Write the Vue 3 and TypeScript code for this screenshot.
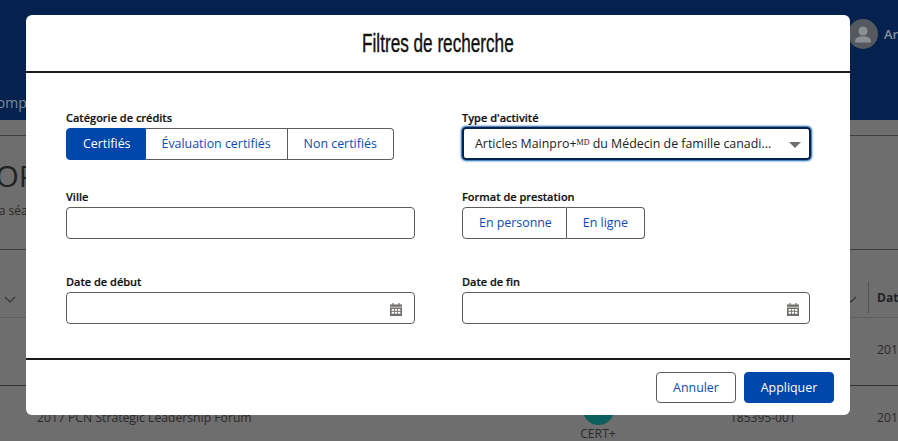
<script setup lang="ts">
const credits: string[] = ['Certifiés', 'Évaluation certifiés', 'Non certifiés']
const formats: string[] = ['En personne', 'En ligne']
</script>

<template>
  <div class="page">
    <header class="top">
      <div class="user">
        <span class="avatar">
          <svg viewBox="0 0 30 30" width="30" height="30"><circle cx="15" cy="12" r="4.6" fill="#8a8f96"/><path d="M7 22.500c0-3.800 3.700-5.300 8-5.300s8 1.500 8 5.300c0 .7-.5 1-1 1H8c-.5 0-1-.3-1-1z" fill="#8a8f96"/></svg>
        </span>
        <span class="user-name">Anne</span>
      </div>
      <div class="nav">Compétences</div>
    </header>
    <section class="intro">
      <h1>TOPO</h1>
      <p>Rechercher la séance</p>
    </section>
    <div class="thead">
      <svg class="chev" viewBox="0 0 12 8" width="12" height="8"><path d="M1 1l5 5 5-5" fill="none" stroke="#333" stroke-width="1.2"/></svg>
      <svg class="chev chev2" viewBox="0 0 12 8" width="12" height="8"><path d="M1 1l5 5 5-5" fill="none" stroke="#333" stroke-width="1.2"/></svg>
      <span class="th-date">Date</span>
    </div>
    <div class="row row-one"><span class="cell-date">2017</span></div>
    <div class="row row-two">
      <span class="cell-name">2017 PCN Strategic Leadership Forum</span>
      <span class="cert"><i></i>CERT+</span>
      <span class="cell-dash">-</span>
      <span class="cell-code">185395-001</span>
      <span class="cell-date">2017</span>
    </div>

    <div class="modal">
      <div class="modal-head"><h2>Filtres de recherche</h2></div>
      <div class="modal-body">
        <div class="field">
          <label>Catégorie de crédits</label>
          <div class="group">
            <button v-for="(c, i) in credits" :key="c" :class="{ on: i === 0 }">{{ c }}</button>
          </div>
        </div>
        <div class="field">
          <label>Type d'activité</label>
          <div class="select">
            <span class="select-text">Articles Mainpro+<sup>MD</sup> du Médecin de famille canadi...</span>
            <span class="caret"></span>
          </div>
        </div>
        <div class="field second">
          <label>Ville</label>
          <div class="input"></div>
        </div>
        <div class="field second">
          <label>Format de prestation</label>
          <div class="group">
            <button v-for="f in formats" :key="f">{{ f }}</button>
          </div>
        </div>
        <div class="field third">
          <label>Date de début</label>
          <div class="input">
            <svg class="cal" viewBox="0 0 12 13" width="12" height="13"><path d="M2.400 0h1.200v1.600H2.400zM8.400 0h1.200v1.600H8.400zM0 1.400h12v2.400H0z" fill="#706e6b"/><path fill-rule="evenodd" d="M0 4.400h12V13H0zM1.600 6v1.800h2.400V6zM4.800 6v1.800h2.400V6zM8 6v1.800h2.400V6zM1.600 8.800v1.900h2.400V8.800zM4.800 8.800v1.900h2.400V8.800zM8 8.800v1.900h2.400V8.800z" fill="#706e6b"/></svg>
          </div>
        </div>
        <div class="field third">
          <label>Date de fin</label>
          <div class="input">
            <svg class="cal cal-end" viewBox="0 0 12 13" width="12" height="13"><path d="M2.400 0h1.200v1.600H2.400zM8.400 0h1.200v1.600H8.400zM0 1.400h12v2.400H0z" fill="#706e6b"/><path fill-rule="evenodd" d="M0 4.400h12V13H0zM1.600 6v1.800h2.400V6zM4.800 6v1.800h2.400V6zM8 6v1.800h2.400V6zM1.600 8.800v1.900h2.400V8.800zM4.800 8.800v1.900h2.400V8.800zM8 8.800v1.900h2.400V8.800z" fill="#706e6b"/></svg>
          </div>
        </div>
      </div>
      <div class="modal-foot">
        <button class="btn">Annuler</button>
        <button class="btn primary">Appliquer</button>
      </div>
    </div>
  </div>
</template>

<style scoped>
.page {
  position: relative;
  width: 898px;
  height: 441px;
  overflow: hidden;
  background: #6e6e6e;
  font-family: "Open Sans", "Noto Sans", sans-serif;
  color: #2a2a2a;
}
.top {
  height: 120px;
  box-sizing: border-box;
  background: #04224d;
  position: relative;
}
.user {
  position: absolute;
  left: 848px;
  top: 19px;
  display: flex;
  align-items: center;
  gap: 6px;
  white-space: nowrap;
}
.avatar {
  width: 30px;
  height: 30px;
  border-radius: 50%;
  background: #55595f;
  display: block;
}
.avatar svg { display: block; }
.user-name {
  font-size: 13px;
  font-weight: 600;
  color: #8a8f96;
}
.nav {
  position: absolute;
  left: -12px;
  top: 93px;
  font-size: 14px;
  color: #7f8a99;
}
.intro {
  margin-top: 15px;
  border-top: 1px solid #3f3f3f;
  height: 113px;
  border-bottom: 1px solid #3f3f3f;
  box-sizing: content-box;
  white-space: nowrap;
  overflow: hidden;
}
.intro h1 {
  margin: 22px 0 0 -21px;
  font-weight: 400;
  font-size: 30px;
  line-height: 36px;
  color: #222;
}
.intro p {
  margin: 9px 0 0 -71px;
  font-size: 12px;
  line-height: 16px;
  color: #2a2a2a;
}
.thead {
  height: 67px;
  border-bottom: 1px solid #5e5e5e;
  position: relative;
}
.chev { position: absolute; left: 4px; top: 46px; }
.chev2 { left: 845px; }
.th-date {
  position: absolute;
  left: 877px;
  top: 40px;
  font-size: 12px;
  font-weight: 700;
  color: #222;
  border-left: 1px solid #555;
  padding-left: 8px;
  margin-left: -9px;
  line-height: 32px;
  margin-top: -8px;
}
.row {
  height: 67px;
  position: relative;
  font-size: 12.2px;
  white-space: nowrap;
}
.row-one { border-bottom: 1px solid #333; }
.cell-date { position: absolute; left: 877px; top: 23px; }
.cell-name { position: absolute; left: 37px; top: 23px; }
.cell-code { position: absolute; left: 730px; top: 23px; font-size: 12px; }
.cell-dash { position: absolute; left: 643px; top: 18px; }
.cert {
  position: absolute;
  left: 580px;
  top: 8px;
  display: flex;
  flex-direction: column;
  align-items: center;
  width: 36px;
}
.cert i {
  display: block;
  width: 31px;
  height: 31px;
  border-radius: 50%;
  background: #0b5f5c;
}
.modal {
  position: absolute;
  left: 26px;
  top: 15px;
  width: 824px;
  height: 400px;
  background: #fff;
  border-radius: 6px;
  display: flex;
  flex-direction: column;
  overflow: hidden;
}
.modal-head {
  height: 58px;
  box-sizing: border-box;
  border-bottom: 2px solid #1a1a1a;
  display: flex;
  align-items: center;
  justify-content: center;
}
.modal-head h2 {
  margin: 0;
  font-family: "Liberation Sans", sans-serif;
  font-size: 26px;
  font-weight: 400;
  color: #111;
  -webkit-text-stroke: 0.4px #111;
  white-space: nowrap;
  transform: scaleX(0.66);
}
.modal-body {
  height: 285px;
  box-sizing: border-box;
  padding: 36px 39px 0 40px;
  display: grid;
  grid-template-columns: 349px 348px;
  column-gap: 47px;
  align-content: start;
  align-items: start;
}
.field { display: flex; flex-direction: column; }
.second { margin-top: 28px; }
.third { margin-top: 34px; }
label {
  font-size: 11px;
  font-weight: 600;
  -webkit-text-stroke: 0.2px #111;
  line-height: 18px;
  padding-bottom: 1px;
  color: #111;
  white-space: nowrap;
}
.group { display: flex; align-self: flex-start; }
.group button {
  height: 32px;
  box-sizing: border-box;
  background: #fff;
  border: 1px solid #5c5c5c;
  border-left-width: 0;
  padding: 0 16px 1px;
  font: 400 12.4px "Open Sans", sans-serif;
  color: #0b4db3;
  white-space: nowrap;
}
.group button:first-child {
  border-left-width: 1px;
  border-radius: 4px 0 0 4px;
  padding-right: 14px;
}
.group button:last-child { border-radius: 0 4px 4px 0; }
.group button.on {
  background: #0047ab;
  border-color: #0047ab;
  color: #fff;
}
.select {
  height: 33px;
  width: 349px;
  margin-top: -1px;
  box-sizing: border-box;
  border: 2px solid #04224d;
  border-radius: 4px;
  box-shadow: 0 0 2px 1px #0b5cab;
  display: flex;
  align-items: center;
  padding: 0 0 1px 11px;
  position: relative;
  font-size: 12.4px;
  color: #222;
  white-space: nowrap;
}
.select sup {
  font-family: "Liberation Serif", serif;
  font-size: 8px;
  line-height: 0;
  vertical-align: 3px;
}
.caret {
  position: absolute;
  right: 8px;
  top: 13px;
  border-left: 6px solid transparent;
  border-right: 6px solid transparent;
  border-top: 6px solid #706e6b;
}
.input {
  height: 32px;
  box-sizing: border-box;
  border: 1px solid #5c5c5c;
  border-radius: 4px;
  position: relative;
}
.cal { position: absolute; right: 12px; top: 10px; }
.cal-end { right: 10px; }
.modal-foot {
  flex: 1;
  border-top: 2px solid #1a1a1a;
  display: flex;
  justify-content: flex-end;
  align-items: center;
  gap: 8px;
  padding: 0 16px 0 0;
}
.btn {
  height: 31px;
  box-sizing: border-box;
  border: 1px solid #5c5c5c;
  border-radius: 4px;
  background: #fff;
  font: 400 12.4px "Open Sans", sans-serif;
  color: #0b4db3;
  width: 80px;
  padding: 0;
}
.btn.primary {
  background: #0047ab;
  border-color: #0047ab;
  color: #fff;
  width: 90px;
}
</style>
